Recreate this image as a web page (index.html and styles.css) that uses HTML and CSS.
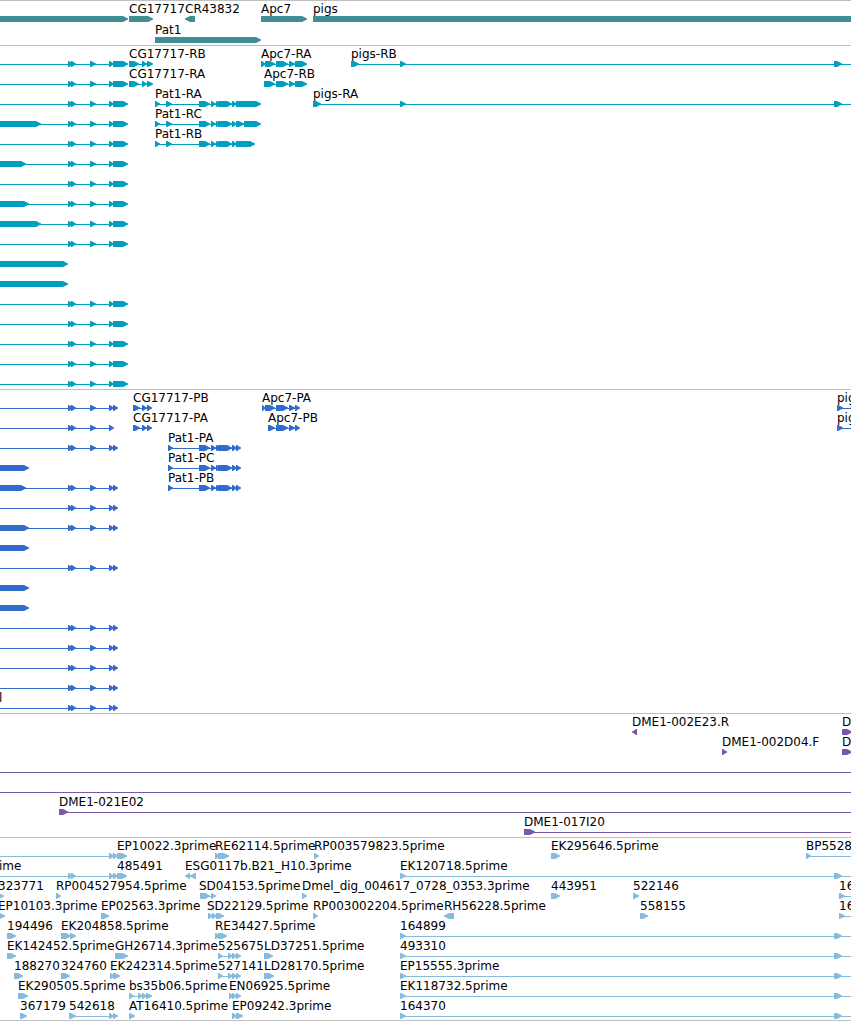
FILE: index.html
```html
<!DOCTYPE html>
<html lang="en">
<head>
<meta charset="utf-8">
<title>Genome browser tracks</title>
<link rel="stylesheet" href="styles.css">
</head>
<body>
<main class="browser" id="browser"></main>
<script src="tracks.js"></script>
</body>
</html>
```
FILE: styles.css
```css
body {
  margin: 0;
  background: #fff;
  color: #000;
  font-family: "DejaVu Sans", sans-serif;
  font-size: 12px;
  line-height: 14px;
}

.browser {
  display: flex;
  flex-direction: column;
  overflow: hidden;
  border-bottom: 1px solid #bfbfbf;
}

.track {
  display: flex;
  flex-direction: column;
  padding: 1px 0 2px;
  border-top: 1px solid #bfbfbf;
}

.track:last-child {
  padding-bottom: 1px;
}

.genes {
  gap: 1px;
  color: #408e94;
}

.transcripts {
  color: #009fbf;
}

.proteins {
  color: #316ccc;
}

.clones {
  color: #7759ab;
}

.ests {
  color: #87bbdd;
}

.row {
  position: relative;
  display: flex;
  align-items: flex-end;
  height: 20px;
}

.glyphs {
  display: block;
  width: 100%;
  height: 6px;
  fill: currentColor;
}

.label {
  position: absolute;
  top: 0;
  color: #000;
  white-space: nowrap;
}
```
FILE: tracks.js
```js
// A feature is [label, start, blocks, lineStart, lineEnd].
// A block is [from, to] pointing right, or [from, to, -1] pointing left.
// END runs a line or a block to the right edge of the view.
const END = Infinity;

const span = (name, blocks, start = blocks[0][0]) =>
  [name, start, blocks, blocks[0][0], blocks[blocks.length - 1][1]];
const open = (name, blocks, start = blocks[0][0]) =>
  [name, start, blocks, blocks[0][0], END];
const solid = (name, from, to, dir = 1) => [name, from, [[from, to, dir]]];

const upstream = [[68, 73], [71, 76], [90, 96]];
const utr = (bar) => ['', 0, [...(bar ? [[-9, bar]] : []), ...upstream, [109, 114], [113, 128]], 0, 120];
const cds = (bar) => ['', 0, [...(bar ? [[-9, bar]] : []), ...upstream, [109, 114], [113, 118]], 0, 114];
const bar = (end) => solid('', -9, end);

const cgR = [[129, 139], [142, 147], [147, 153]];
const cgP = [[133, 140], [142, 147], [147, 152]];
const apcR = [[276, 288], [289, 295], [295, 307]];
const apcP = [[276, 288], [289, 295], [295, 300]];
const patMid = [[199, 210], [211, 216], [216, 220], [218, 232], [232, 237]];
const patR = (...tail) => [[155, 160], [166, 172], ...patMid, ...tail];
const patP = [[168, 173], ...patMid, [236, 241]];
const far = (name) => open(name, [[400, 406], [834, 842]]);

const tracks = [
  ['genes', [
    [bar(128), solid('CG17717', 129, 153), solid('CR43832', 185, 195, -1), solid('Apc7', 261, 307), solid('pigs', 313, END)],
    [solid('Pat1', 155, 261)]
  ]],
  ['transcripts', [
    [utr(), span('CG17717-RB', cgR), span('Apc7-RA', [[261, 266], [265, 275], ...apcR]), open('pigs-RB', [[351, 359], [400, 406], [834, 842]])],
    [utr(), span('CG17717-RA', cgR), span('Apc7-RB', [[264, 275], ...apcR])],
    [utr(), span('Pat1-RA', patR([236, 261])), open('pigs-RA', [[313, 321], [400, 406], [834, 842]])],
    [utr(41), span('Pat1-RC', patR([236, 244], [244, 261]))],
    [utr(), span('Pat1-RB', patR([236, 255]))],
    [utr(26)], [utr()], [utr(29)], [utr(41)], [utr()], [bar(68)], [bar(68)],
    [utr()], [utr()], [utr()], [utr()], [utr()]
  ]],
  ['proteins', [
    [cds(), span('CG17717-PB', cgP), span('Apc7-PA', [[262, 266], [265, 275], ...apcP]), open('pig', [[837, 843]])],
    [['', 0, [...upstream, [109, 114]], 0, 114], span('CG17717-PA', cgP), span('Apc7-PB', [[268, 275], ...apcP]), open('pig', [[837, 843]])],
    [cds(), span('Pat1-PA', patP)],
    [bar(29), span('Pat1-PC', patP)],
    [cds(26), span('Pat1-PB', patP)],
    [cds()], [cds(29)], [bar(29)], [cds()], [bar(29)], [bar(29)],
    [cds()], [cds()], [cds()], [cds()], [['l', -1, []], cds()]
  ]],
  ['clones', [
    [solid('DME1-002E23.R', 632, 637, -1), solid('D', 842, 852)],
    [solid('DME1-002D04.F', 722, 727), solid('D', 842, 852)],
    [['', 0, [], 0, END]],
    [['', 0, [], 0, END]],
    [open('DME1-021E02', [[59, 68]])],
    [open('DME1-017I20', [[524, 535]])]
  ]],
  ['ests', [
    [['EP10022.3prime', 117, [[109, 114], [113, 118], [117, 127]], 0, 118], span('RE62114.5prime', [[215, 220], [218, 229]]), solid('RP003579823.5prime', 314, 319), solid('EK295646.5prime', 551, 560), open('BP5528', [[806, 811]])],
    [['ime', -1, [[68, 73], [71, 76]], 0, 114], span('485491', [[109, 114], [113, 118], [117, 127]], 117), span('ESG0117b.B21_H10.3prime', [[185, 190, -1], [190, 196, -1]]), far('EK120718.5prime')],
    [['323771', -2, [[-3, 4]]], solid('RP004527954.5prime', 56, 61), span('SD04153.5prime', [[200, 210], [211, 216]], 199), solid('Dmel_dig_004617_0728_0353.3prime', 302, 307), solid('443951', 551, 560), solid('522146', 633, 639), open('16', [[839, 845]])],
    [['EP10103.3prime', -2, [[-3, 5]]], solid('EP02563.3prime', 101, 109), span('SD22129.5prime', [[208, 213], [212, 217], [216, 224]], 207), solid('RP003002204.5prime', 313, 318), solid('RH56228.5prime', 444, 454, -1), solid('558155', 640, 648), open('16', [[839, 845]])],
    [solid('194496', 7, 16), span('EK204858.5prime', [[61, 71], [70, 76]]), span('RE34427.5prime', [[215, 220], [218, 227]]), far('164899')],
    [solid('EK142452.5prime', 7, 16), solid('GH26714.3prime', 115, 128), span('525675', [[218, 223], [228, 233], [232, 237], [236, 241]]), solid('LD37251.5prime', 264, 273), far('493310')],
    [solid('188270', 14, 23), solid('324760', 61, 70), span('EK242314.5prime', [[110, 115], [113, 120]]), span('527141', [[218, 223], [228, 233], [232, 237], [236, 241]]), solid('LD28170.5prime', 264, 274), far('EP15555.3prime')],
    [solid('EK290505.5prime', 18, 28), span('bs35b06.5prime', [[129, 134], [138, 143], [142, 147], [146, 152]]), span('EN06925.5prime', [[229, 234], [232, 237], [236, 241]]), far('EK118732.5prime')],
    [solid('367179', 20, 27), span('542618', [[69, 76], [109, 114], [113, 118]]), solid('AT16410.5prime', 129, 135), span('EP09242.3prime', [[232, 237], [236, 243]]), far('164370')]
  ]]
];

const SVG = 'http://www.w3.org/2000/svg';

function shape(parent, tag, attributes) {
  const node = document.createElementNS(SVG, tag);
  for (const [key, value] of Object.entries(attributes)) node.setAttribute(key, value);
  parent.append(node);
}

function drawBlock(svg, [from, to, dir = 1]) {
  if (to === END) {
    shape(svg, 'rect', { x: from, y: 0, width: '100%', height: 6 });
    return;
  }
  // The head keeps a full shoulder, then narrows to a two-pixel tip.
  const head = Math.min(5, to - from - 1);
  const base = dir > 0 ? from : to;
  const tip = dir > 0 ? to : from;
  const neck = tip - dir * head;
  const shoulder = tip - dir * 2;
  const points = `${base},0 ${neck},0 ${shoulder},1.4 ${tip},2.4 ${tip},3.6 ${shoulder},4.6 ${neck},6 ${base},6`;
  shape(svg, 'polygon', { points });
}

for (const [kind, rows] of tracks) {
  const track = document.createElement('section');
  track.className = `track ${kind}`;
  for (const features of rows) {
    const row = document.createElement('div');
    row.className = 'row';
    const svg = document.createElementNS(SVG, 'svg');
    svg.setAttribute('class', 'glyphs');
    for (const [name, start, blocks, lineStart, lineEnd] of features) {
      if (lineEnd !== undefined) {
        const width = lineEnd === END ? '100%' : Math.max(1, lineEnd - lineStart - 3);
        shape(svg, 'rect', { x: lineStart, y: 3, width, height: 1 });
      }
      blocks.forEach((block) => drawBlock(svg, block));
      if (name) {
        const label = document.createElement('span');
        label.className = 'label';
        label.style.left = `${start}px`;
        label.textContent = name;
        row.append(label);
      }
    }
    row.prepend(svg);
    track.append(row);
  }
  document.getElementById('browser').append(track);
}
```
